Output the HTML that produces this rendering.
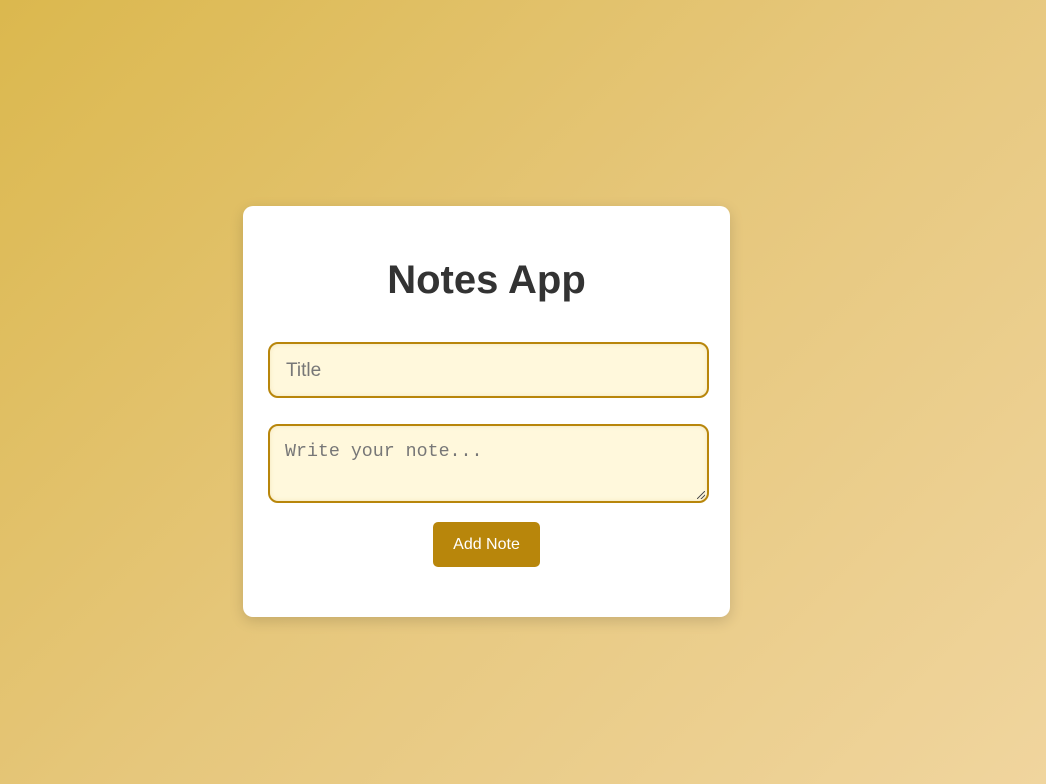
<!DOCTYPE html>
<html><head><style>
html,body{margin:0;height:784px;width:1046px;overflow:hidden}
body{background:linear-gradient(135deg,#dbb84e 0%,#e6c77c 50%,#f0d59e 100%);font-family:"Liberation Sans",sans-serif;position:relative}
.card{position:absolute;left:243px;top:206px;width:487px;height:411px;background:#fff;border-radius:10px;box-shadow:0 4px 14px rgba(0,0,0,0.15)}
h1{margin:0;position:absolute;top:51px;left:0;right:0;text-align:center;font-size:40px;font-weight:bold;color:#333;line-height:46px}
.in{position:absolute;left:25px;width:441px;box-sizing:border-box;border:2px solid #b8860b;border-radius:10px;background:#fff8dc;box-shadow:inset 0 0 5px rgba(184,134,11,0.15);color:#777}
.t{top:136px;height:56px;font-size:19px;padding:16px 16px}
.n{top:218px;height:79px;font-family:"Liberation Mono",monospace;font-size:18.3px;padding:16px 15px}
.rz{position:absolute;right:2px;bottom:2px;width:8px;height:8px;background:linear-gradient(135deg,transparent 45%,#555 45%,#555 55%,transparent 55%,transparent 70%,#555 70%,#555 80%,transparent 80%)}
.b{position:absolute;left:190px;top:316px;width:107px;height:45px;background:#b8860b;color:#fff;border-radius:5px;font-size:16px;text-align:center;line-height:45px}
</style></head><body>
<div class="card">
<h1>Notes App</h1>
<div class="in t">Title</div>
<div class="in n">Write your note...<div class="rz"></div></div>
<div class="b">Add Note</div>
</div>
</body></html>
